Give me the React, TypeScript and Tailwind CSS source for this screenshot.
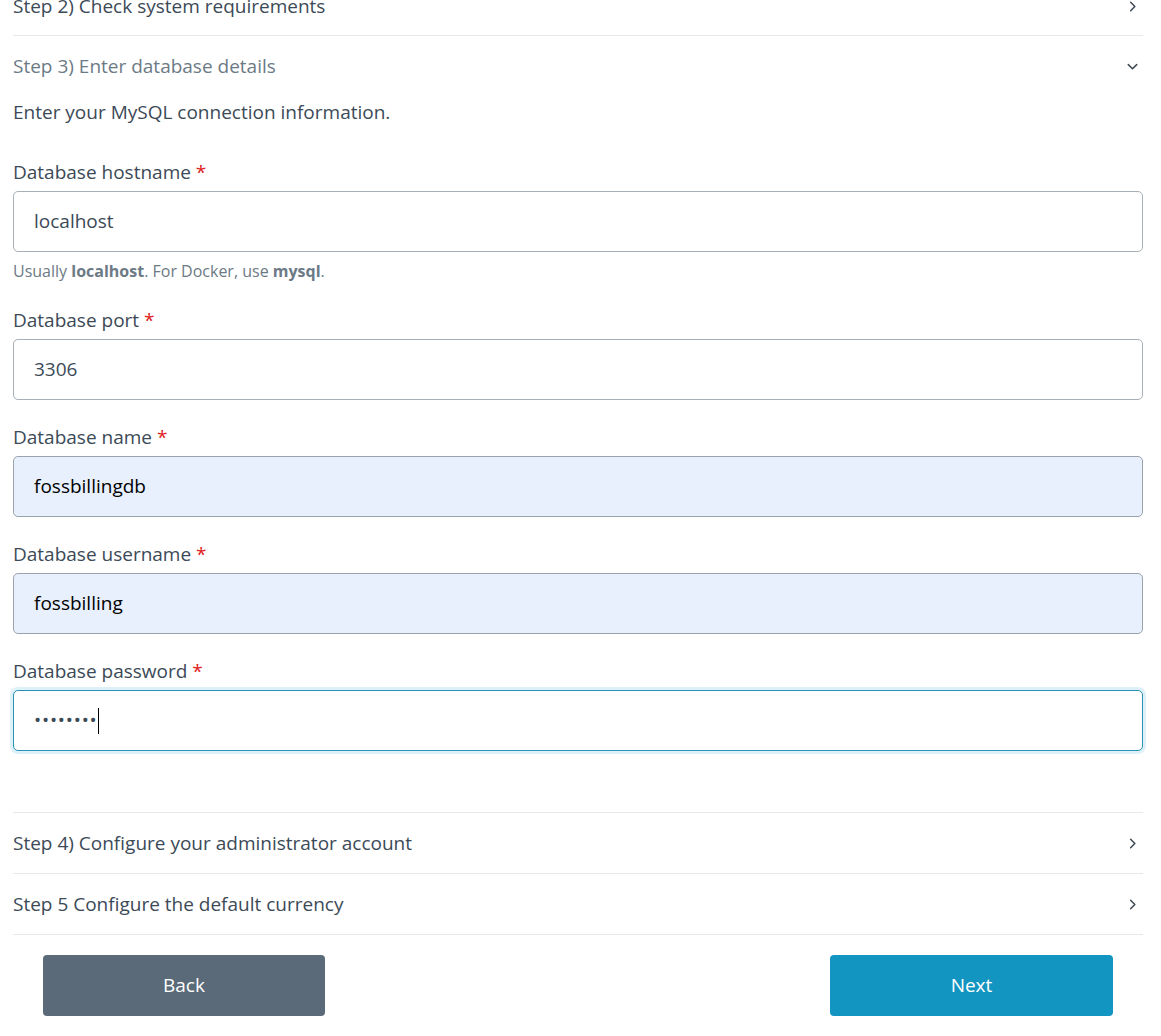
import React from "react";

const Chevron = ({ down = false }: { down?: boolean }) => (
  <svg width="15" height="15" viewBox="0 0 16 16" fill="none" stroke="#3d4852" strokeWidth="1.6" strokeLinecap="round" strokeLinejoin="round">
    {down ? <path d="M3.5 6 L8 10.5 L12.5 6" /> : <path d="M6 3.5 L10.5 8 L6 12.5" />}
  </svg>
);

const Row = ({ title, muted = false, down = false }: { title: string; muted?: boolean; down?: boolean }) => (
  <div className="flex h-[60px] items-center justify-between">
    <span className={muted ? "text-[#6c7a86]" : "text-[#3c4a57]"}>{title}</span>
    <span className="mr-[3px]">
      <Chevron down={down} />
    </span>
  </div>
);

const Field = ({ label, value, autofill = false, focus = false, type = "text" }: { label: string; value: string; autofill?: boolean; focus?: boolean; type?: string }) => (
  <div className="flex flex-col">
    <label className="mb-[7px] leading-[24px] text-[#3c4a57]">
      {label} <span className="text-[#e02020]">*</span>
    </label>
    <div
      className={`flex h-[61px] items-center rounded-[5px] border px-[20px] ${
        autofill
          ? "border-[#9aa3ab] bg-[#e8f0fe] text-black"
          : focus
          ? "border-[#2a93b5] bg-white text-[#3c4a57] shadow-[0_0_0_3px_#dff1f8]"
          : "border-[#a8afb5] bg-white text-[#3c4a57]"
      }`}
    >
      {type === "password" ? (
        <span className="flex items-center">
          <span className="tracking-[0.8px] text-[#3c4a57]">{value}</span>
          <span className="inline-block h-[26px] w-[1px] bg-black" />
        </span>
      ) : (
        <span>{value}</span>
      )}
    </div>
  </div>
);

export default function App() {
  return (
    <div className="min-h-screen bg-white" style={{ fontFamily: "'Open Sans', 'Noto Sans', sans-serif" }}>
      <div className="mx-[13px] mt-[-23px] w-[1130px] text-[19px]">
        <div className="border-b border-[#e6e8ea]">
          <div className="flex h-[58px] items-center justify-between">
            <span className="text-[#3c4a57]">Step 2) Check system requirements</span>
            <span className="mr-[3px]">
              <Chevron />
            </span>
          </div>
        </div>
        <div className="border-b border-[#e6e8ea]">
          <div className="flex h-[61px] items-center justify-between">
            <span className="text-[#6c7a86]">Step 3) Enter database details</span>
            <span className="mr-[3px]">
              <Chevron down />
            </span>
          </div>
          <div className="pb-[61px]">
            <p className="mt-[3px] mb-[36px] leading-[24px] text-[#3c4a57]">Enter your MySQL connection information.</p>
            <div className="flex flex-col">
              <Field label="Database hostname" value="localhost" />
              <p className="mt-[7px] text-[16px] leading-[24px] text-[#6c7a86]">
                Usually <b className="font-bold">localhost</b>. For Docker, use <b className="font-bold">mysql</b>.
              </p>
              <div className="mt-[25px]">
                <Field label="Database port" value="3306" />
              </div>
              <div className="mt-[25px]">
                <Field label="Database name" value="fossbillingdb" autofill />
              </div>
              <div className="mt-[25px]">
                <Field label="Database username" value="fossbilling" autofill />
              </div>
              <div className="mt-[25px]">
                <Field label="Database password" value="••••••••" focus type="password" />
              </div>
            </div>
          </div>
        </div>
        <div className="border-b border-[#e6e8ea]">
          <Row title="Step 4) Configure your administrator account" />
        </div>
        <div className="border-b border-[#e6e8ea]">
          <Row title="Step 5 Configure the default currency" />
        </div>
        <div className="flex justify-between px-[30px] pt-[20px]">
          <button className="h-[61px] w-[282px] rounded-[4px] bg-[#5a6a78] text-white">Back</button>
          <button className="h-[61px] w-[283px] rounded-[4px] bg-[#1395c1] text-white">Next</button>
        </div>
      </div>
    </div>
  );
}
